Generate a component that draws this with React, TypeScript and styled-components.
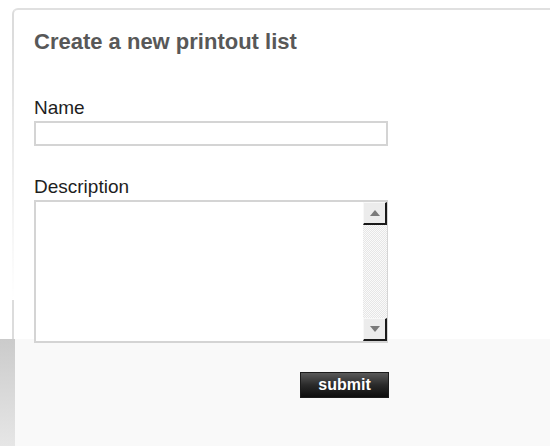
import React from 'react'
import styled, { createGlobalStyle } from 'styled-components'

const GlobalStyle = createGlobalStyle`
  html, body {
    margin: 0;
    padding: 0;
    background: #fff;
  }
  body {
    font-family: 'Liberation Sans', Arial, sans-serif;
  }
`

const Page = styled.form`
  display: flex;
  flex-direction: column;
  width: 550px;
  height: 446px;
  overflow: hidden;
`

const Panel = styled.section`
  position: relative;
  box-sizing: border-box;
  height: 331px;
  margin: 8px 0 0 12px;
  padding: 19px 0 0 20px;
  border-top: 2px solid #e0e0e0;
  border-left: 2px solid #dcdcdc;
  border-top-left-radius: 6px;
  background: #fff;

  &::after {
    content: '';
    position: absolute;
    left: -2px;
    top: 24px;
    width: 2px;
    height: 266px;
    background: linear-gradient(rgba(255, 255, 255, 0), #fff);
  }
`

const Title = styled.h2`
  margin: 0 0 42px;
  font-size: 22px;
  line-height: 26px;
  font-weight: bold;
  color: #585858;
`

const Label = styled.label`
  display: block;
  margin: 0 0 2px;
  font-size: 19px;
  line-height: 22px;
  color: #1e1e1e;
`

const TextInput = styled.input`
  display: block;
  box-sizing: border-box;
  width: 354px;
  height: 25px;
  margin: 0 0 30px;
  border: 2px solid #d4d4d4;
  background: #fff;
  outline: none;
`

const AreaBox = styled.div`
  position: relative;
  z-index: 1;
  display: flex;
  box-sizing: border-box;
  width: 354px;
  height: 143px;
  border: 2px solid #d4d4d4;
  border-right-width: 1px;
  background: #fff;
`

const TextArea = styled.textarea`
  flex: 1;
  border: none;
  resize: none;
  outline: none;
  overflow: hidden;
  background: transparent;
`

const ScrollBar = styled.div`
  display: flex;
  flex-direction: column;
  width: 24px;
`

const ScrollButton = styled.div`
  display: flex;
  align-items: center;
  justify-content: center;
  box-sizing: border-box;
  height: 23px;
  background: #ececec;
  border-top: 1px solid #f8f8f8;
  border-left: 1px solid #f8f8f8;
  border-right: 2px solid #1a1a1a;
  border-bottom: 2px solid #1a1a1a;
`

const Track = styled.div`
  flex: 1;
  background-color: #fafafa;
  background-image: repeating-conic-gradient(#e6e6e6 0% 25%, #fafafa 0% 50%);
  background-size: 2px 2px;
`

const Footer = styled.div`
  display: flex;
  flex: 1;
`

const Strip = styled.div`
  width: 15px;
  background: linear-gradient(#cbcbcb, #e6e6e6);
`

const FooterBody = styled.div`
  flex: 1;
  padding: 33px 0 0 19px;
  background: #f9f9f9;
`

const Actions = styled.div`
  display: flex;
  justify-content: flex-end;
  width: 355px;
`

const SubmitButton = styled.button`
  box-sizing: border-box;
  width: 89px;
  height: 26px;
  padding: 0;
  border: 1px solid #1c1c1c;
  background: linear-gradient(#5a5a5a, #2a2a2a 50%, #0e0e0e);
  color: #fff;
  font-family: 'Liberation Sans', Arial, sans-serif;
  font-size: 16px;
  font-weight: bold;
  cursor: pointer;
`

const Arrow = ({ dir }: { dir: 'up' | 'down' }) => (
  <svg width="10" height="6" viewBox="0 0 10 6">
    {dir === 'up'
      ? <polygon points="0,6 10,6 5,0" fill="#7a7a7a" />
      : <polygon points="0,0 10,0 5,6" fill="#7a7a7a" />}
  </svg>
)

const App = () => {
  return (
    <Page onSubmit={(e) => e.preventDefault()}>
      <GlobalStyle />
      <Panel>
        <Title>Create a new printout list</Title>
        <Label htmlFor="name">Name</Label>
        <TextInput id="name" type="text" />
        <Label htmlFor="description">Description</Label>
        <AreaBox>
          <TextArea id="description" />
          <ScrollBar>
            <ScrollButton><Arrow dir="up" /></ScrollButton>
            <Track />
            <ScrollButton><Arrow dir="down" /></ScrollButton>
          </ScrollBar>
        </AreaBox>
      </Panel>
      <Footer>
        <Strip />
        <FooterBody>
          <Actions>
            <SubmitButton type="submit">submit</SubmitButton>
          </Actions>
        </FooterBody>
      </Footer>
    </Page>
  )
}

export default App
